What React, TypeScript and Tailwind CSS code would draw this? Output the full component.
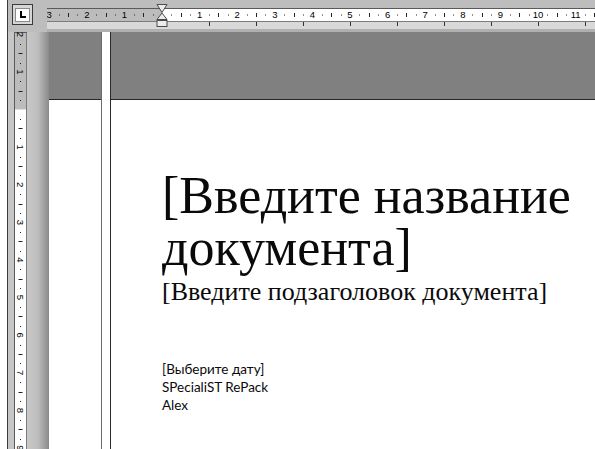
import React from 'react';

// ruler geometry (px)
const CM = 37.6;
const H_ZERO = 115; // zero of the horizontal ruler, relative to its left edge
const V_ZERO = 77.5; // zero of the vertical ruler, relative to its top
const TAB = 47;

const HRuler: React.FC = () => {
    const marks: React.ReactNode[] = [];
    for (let q = -12; q <= 46; q++) {
        const x = H_ZERO + (q * CM) / 4;
        if (x < 0 || x > 548) continue;
        const n = Math.abs(q / 4);
        if (q % 4 === 0) {
            if (q === 0) continue;
            marks.push(
                <text key={q} x={x} y={18} fontSize={9.5} textAnchor="middle" fill="#000"
                    fontFamily='"Liberation Sans", Arial, sans-serif'>
                    {n}
                </text>
            );
        } else if (Math.abs(q % 4) === 2) {
            marks.push(<rect key={q} x={Math.round(x)} y={13} width={1} height={4} fill="#222" />);
        } else {
            marks.push(<rect key={q} x={Math.round(x)} y={14.5} width={1} height={1} fill="#222" />);
        }
    }
    const tabs = [];
    for (let k = 1; k <= 9; k++) {
        tabs.push(<rect key={k} x={H_ZERO + TAB * k} y={22} width={1} height={4} fill="#333" />);
    }

    return (
        <svg width={548} height={32} className="block shrink-0">
            <rect x={0} y={8} width={548} height={1} fill="#5a5a5a" />
            <rect x={0} y={9} width={H_ZERO} height={12} fill="#bcbcbc" />
            <rect x={H_ZERO} y={9} width={548 - H_ZERO} height={12} fill="#ffffff" />
            <rect x={0} y={21} width={548} height={1} fill="#7c7c7c" />
            <rect x={0} y={22} width={548} height={7} fill="#d9d9d9" />
            <rect x={0} y={29} width={548} height={3} fill="#b0b0b0" />
            {marks}
            {tabs}
            {/* indent markers */}
            <polygon points={`${H_ZERO - 5},4.5 ${H_ZERO + 5},4.5 ${H_ZERO},12.5`} fill="#ececec" stroke="#4a4a4a" strokeWidth={1} />
            <polygon points={`${H_ZERO},13 ${H_ZERO - 5},19.5 ${H_ZERO + 5},19.5`} fill="#ececec" stroke="#4a4a4a" strokeWidth={1} />
            <rect x={H_ZERO - 5} y={20.5} width={10} height={6} fill="#ececec" stroke="#4a4a4a" strokeWidth={1} />
        </svg>
    );
};

const VRuler: React.FC = () => {
    const marks: React.ReactNode[] = [];
    for (let q = -8; q <= 40; q++) {
        const y = V_ZERO + (q * CM) / 4;
        if (y < 0 || y > 420) continue;
        const n = Math.abs(q / 4);
        if (q % 4 === 0) {
            if (q === 0) continue;
            marks.push(
                <text key={q} x={6.5} y={y} fontSize={9.5} textAnchor="middle" dominantBaseline="central" fill="#000"
                    fontFamily='"Liberation Sans", Arial, sans-serif' transform={`rotate(90 6.5 ${y})`}>
                    {n}
                </text>
            );
        } else if (Math.abs(q % 4) === 2) {
            marks.push(<rect key={q} x={4.5} y={Math.round(y)} width={4} height={1} fill="#222" />);
        } else {
            marks.push(<rect key={q} x={6} y={Math.round(y)} width={1} height={1} fill="#222" />);
        }
    }
    return (
        <svg width={13} height={420} className="block shrink-0">
            <rect x={0} y={0} width={13} height={V_ZERO} fill="#bcbcbc" />
            <rect x={0} y={V_ZERO} width={13} height={420 - V_ZERO} fill="#ffffff" />
            <rect x={0} y={0} width={1} height={420} fill="#5a5a5a" />
            <rect x={12} y={0} width={1} height={420} fill="#7c7c7c" />
            <rect x={0} y={0} width={13} height={1} fill="#5a5a5a" />
            {marks}
        </svg>
    );
};

const Page: React.FC = () => (
    <div className="flex-1 flex min-w-0 bg-white">
        <div className="w-[52px] shrink-0 flex flex-col">
            <div className="h-[68px] bg-[#808080] border-b border-[#262626]" />
        </div>
        <div className="w-[10px] shrink-0 bg-white border-l border-[#6a6a6a] border-r border-r-[#2a2a2a]" />
        <div className="flex-1 flex flex-col min-w-0">
            <div className="h-[68px] shrink-0 bg-[#808080] border-b border-[#262626]" />
            <div className="pl-[51px] pt-[70px] text-[#0a0a0a]">
                <h1 className="text-[52px] leading-[52px] font-normal whitespace-nowrap font-['Liberation_Serif',serif]">
                    [Введите название
                    <br />
                    документа]
                </h1>
                <h2 className="mt-[3px] text-[26px] leading-[29px] font-normal whitespace-nowrap font-['Liberation_Serif',serif]">
                    [Введите подзаголовок документа]
                </h2>
                <div className="mt-[54px] text-[13.5px] leading-[18px] font-['Lato',sans-serif]">
                    <div>[Выберите дату]</div>
                    <div>SPecialiST RePack</div>
                    <div>Alex</div>
                </div>
            </div>
        </div>
    </div>
);

export default function App() {
    return (
        <div className="w-[595px] h-[449px] overflow-hidden flex bg-[#c6c6c6] select-none">
            <div className="w-[8px] shrink-0 bg-white border-r border-[#3a3a3a]" />
            <div className="flex-1 flex flex-col min-w-0">
                {/* Top: ruler toggle + horizontal ruler */}
                <div className="h-[32px] shrink-0 flex bg-[#bdbdbd]">
                    <div className="w-[39px] shrink-0 pl-[4px] pt-[4px]">
                        <div className="w-[21px] h-[21px] border border-[#3a3a3a] bg-[#d6d6d6] flex items-center justify-center">
                            <div className="w-[15px] h-[14px] bg-white border border-[#8a8a8a] flex items-center justify-center">
                                <svg width="7" height="7" viewBox="0 0 7 7">
                                    <rect x="1" y="0" width="2" height="7" fill="#000" />
                                    <rect x="1" y="5" width="6" height="2" fill="#000" />
                                </svg>
                            </div>
                        </div>
                    </div>
                    <HRuler />
                </div>
                {/* Body: vertical ruler + page */}
                <div className="flex-1 flex min-h-0">
                    <div className="w-[41px] shrink-0 flex">
                        <div className="w-[6px] shrink-0" />
                        <VRuler />
                        <div className="flex-1 bg-gradient-to-r from-[#c8c8c8] via-[#bdbdbd] to-[#8a8a8a]" />
                    </div>
                    <Page />
                </div>
            </div>
        </div>
    );
}
